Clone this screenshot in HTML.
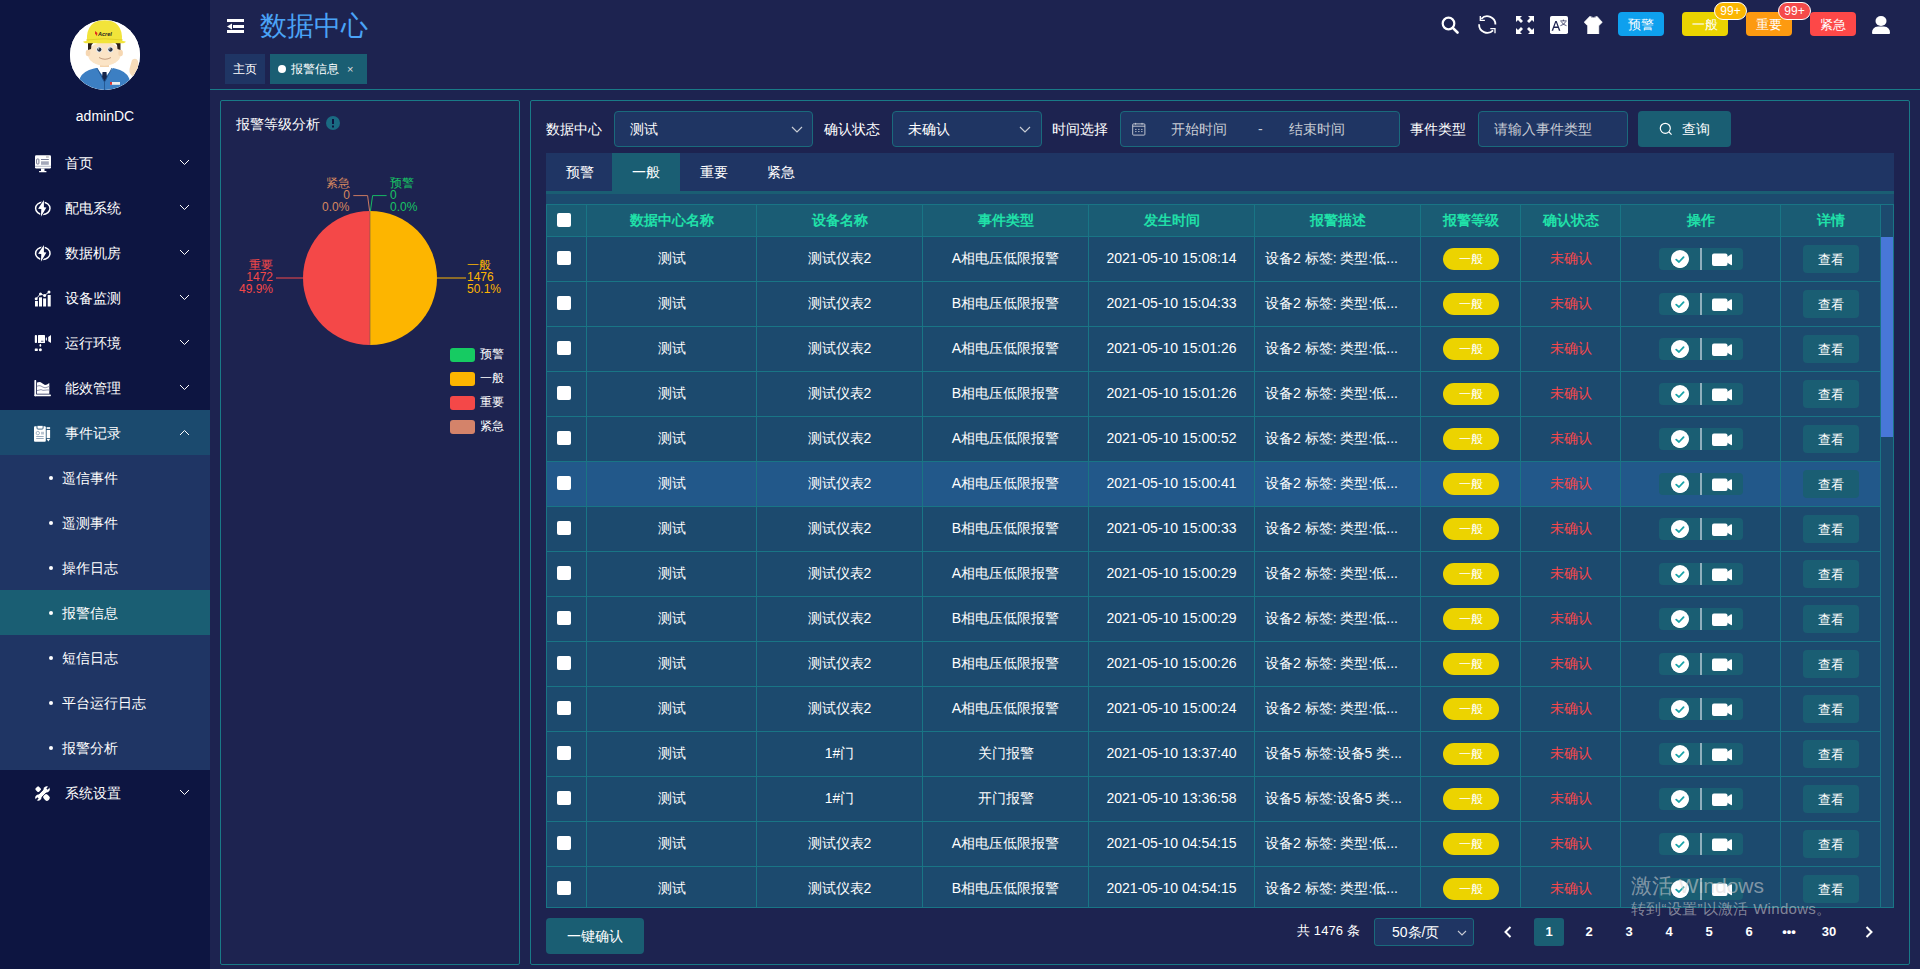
<!DOCTYPE html>
<html><head><meta charset="utf-8"><style>
*{margin:0;padding:0;box-sizing:border-box}
html,body{width:1920px;height:969px;overflow:hidden}
body{background:#1d2350;font-family:"Liberation Sans",sans-serif;color:#fff;font-size:14px;position:relative}
.abs{position:absolute}
#side{position:absolute;left:0;top:0;width:210px;height:969px;background:#0d1541}
.avatar{position:absolute;left:70px;top:20px;width:70px;height:70px;border-radius:50%;background:#fff;overflow:hidden}
.uname{position:absolute;left:0;width:210px;top:107px;text-align:center;font-size:14px;line-height:18px;color:#fff}
.mi{position:absolute;left:0;width:210px;height:45px}
.mi .ic{position:absolute;left:34px;top:14px;width:17px;height:17px}
.mi .tx{position:absolute;left:65px;top:1px;line-height:45px;font-size:14px;color:#fff}
.mi .ch{position:absolute;left:179px;top:19px;width:11px;height:7px}
.si{position:absolute;left:0;width:210px;height:45px}
.si .dot{position:absolute;left:49px;top:21px;width:4px;height:4px;border-radius:50%;background:#fff}
.si .tx{position:absolute;left:62px;top:1px;line-height:45px;font-size:14px;color:#fff}
.title{position:absolute;left:260px;top:9px;font-size:27px;line-height:34px;color:#4aa3f7}
.tab{position:absolute;top:54px;height:30px;line-height:30px;font-size:12px;color:#fff}
.hdrline{position:absolute;left:210px;top:89px;width:1710px;height:1px;background:#197a87}
.panel{position:absolute;border:1px solid #197a87;border-radius:2px}
.lbl{position:absolute;top:111px;line-height:36px;font-size:14px;color:#fff}
.inp{position:absolute;top:111px;height:36px;border:1px solid #1a6a7c;border-radius:4px;background:#1f3563;line-height:34px;font-size:14px}
.ph{color:#c8ccd4}
.btn{position:absolute;background:#1a5e73;border-radius:4px;color:#fff;text-align:center}
.tabbar{position:absolute;left:546px;top:153px;width:1348px;height:38px;background:#1f3564}
.tabbar .t{position:absolute;top:0;height:38px;line-height:38px;width:67px;text-align:center;font-size:14px}
.stripe{position:absolute;left:546px;top:191px;width:1348px;height:3px;background:#1a5e73}
.tarea{position:absolute;left:546px;top:194px;width:1348px;height:10px;background:#1c4a6e}
.thead{position:absolute;left:546px;top:204px;width:1335px;height:33px;background:#1a5c74;border-top:1px solid #197585;border-bottom:1px solid #197585}
.th{position:absolute;top:204px;height:33px;line-height:32px;text-align:center;color:#20e0a8;font-weight:bold;font-size:14px}
.tbody{position:absolute;left:546px;top:237px;width:1348px;height:670px;overflow:hidden;background:#1c4a6e}
.tr{position:absolute;left:546px;width:1335px;height:44px;background:#1c4a6e}
.tr.hov{background:#22588a}
.hl{position:absolute;left:546px;width:1335px;height:1px;background:#197585}
.vl{position:absolute;width:1px;background:#197585}
.td{position:absolute;height:44px;line-height:42px;text-align:center;font-size:14px;color:#fff;white-space:nowrap}
.tdl{text-align:left}
.red{color:#f5474b}
.cb{position:absolute;width:14px;height:14px;border-radius:2px;background:#fff}
.lvl{position:absolute;width:56px;height:22px;border-radius:11px;background:#ecd300;text-align:center;line-height:22px;font-size:12px;color:#fff}
.ops{position:absolute;width:84px;height:22px;border-radius:4px;background:#1a5e73}
.ops .chk{position:absolute;left:12px;top:2px;width:18px;height:18px;border-radius:50%;background:#fff}
.ops .dv{position:absolute;left:41px;top:0;width:2px;height:22px;background:#8fb0bd}
.ops .cam{position:absolute;left:53px;top:5px;width:20px;height:13px}
.det{position:absolute;width:56px;height:28px;border-radius:4px;background:#1a5e73;text-align:center;line-height:30px;font-size:13px;color:#fff}
.hbtn{position:absolute;top:12px;width:46px;height:24px;border-radius:4px;text-align:center;line-height:25px;font-size:13px;color:#fff}
.badge{position:absolute;top:2px;width:33px;height:18px;border-radius:9px;border:1px solid #fff;text-align:center;line-height:17px;font-size:12px;color:#fff}
.pg{position:absolute;top:918px;width:30px;height:28px;line-height:28px;text-align:center;font-size:13px;font-weight:bold;color:#fff}
.leg{position:absolute;left:450px;width:25px;height:14px;border-radius:3px}
.legt{position:absolute;left:480px;font-size:12px;line-height:14px;color:#fff}
.pl{position:absolute;font-size:12px;line-height:12px}
.pgs{font-size:14px!important}

</style></head><body>
<div id="side">
  <div class="avatar">
    <svg width="70" height="70" viewBox="0 0 70 70">
      <rect width="70" height="70" fill="#fff"/>
      <path d="M62 40 Q66 37 68 41 L69 50 Q66 56 62 56 Q58 52 60 47 Z" fill="#f6dcba"/>
      <path d="M6 70 L10 58 Q13 51 24 48.5 L34.5 46 L45 48.5 Q56 51 59 58 L63 70 Z" fill="#3c7fc3"/>
      <path d="M25.5 46.2 L34.5 58 L44.5 46.2 L40 45 L29 45 Z" fill="#fff"/>
      <path d="M32.5 52 L36.5 52 L37 58 L34.5 62 L32 58 Z" fill="#16254a"/>
      <path d="M27 48 L34.5 62 L34.5 70 M42 48 L34.5 62" stroke="#24568f" stroke-width="0.9" fill="none"/>
      <rect x="40" y="62" width="10" height="2.8" fill="#eee"/><rect x="40" y="62" width="2" height="2.8" fill="#d33"/>
      <rect x="30" y="41" width="9" height="6" fill="#f3d3ad"/>
      <ellipse cx="34.3" cy="34" rx="16.5" ry="11.8" fill="#fbe4c6"/>
      <ellipse cx="18" cy="33" rx="2.3" ry="3.3" fill="#f6d7b2"/>
      <ellipse cx="50.6" cy="33" rx="2.3" ry="3.3" fill="#f6d7b2"/>
      <path d="M18 30 L18 22 L24 22 L21.5 25 L21 29 Z" fill="#2a1f1a"/>
      <path d="M50.5 30 L50.5 22 L44.5 22 L47 25 L47.5 29 Z" fill="#2a1f1a"/>
      <circle cx="29.1" cy="29.5" r="2.9" fill="#e4ecf4"/><circle cx="29.3" cy="29.6" r="2.1" fill="#2b3242"/><circle cx="28.6" cy="28.8" r="0.6" fill="#fff"/>
      <circle cx="40.3" cy="29.5" r="2.9" fill="#e4ecf4"/><circle cx="40.5" cy="29.6" r="2.1" fill="#2b3242"/><circle cx="39.8" cy="28.8" r="0.6" fill="#fff"/>
      <path d="M29 37.5 Q35 41 41 37.5" stroke="#b58a6a" stroke-width="0.8" fill="none"/>
      <path d="M16.9 21 Q16 0.3 34.5 0.3 Q53 0.3 52 21 Z" fill="#f2e43a"/>
      <path d="M13.2 21.5 Q34.5 17 55.7 21.5 Q55.7 23.5 50 23.2 L19 23.2 Q13.2 23.5 13.2 21.5 Z" fill="#f2e43a"/>
      <path d="M16 20 Q34.5 17.5 53 20" stroke="#d6c21e" stroke-width="0.6" fill="none"/>
      <path d="M25 11 L27.5 13 L26.8 16 L25 13.5 Z" fill="#e42b1f"/>
      <text x="28" y="16" font-size="5.5" font-weight="bold" font-style="italic" fill="#222" font-family="Liberation Sans">Acrel</text>
    </svg>
  </div>
  <div class="uname">adminDC</div>

  <div class="mi" style="top:140px">
    <svg class="ic" style="width:18px;height:19px" viewBox="0 0 18 19"><rect x="1" y="1.2" width="16" height="13.3" rx="1.2" fill="#fff"/><rect x="2.6" y="5" width="2.3" height="5" rx="0.6" fill="none" stroke="#555a78" stroke-width="0.8"/><rect x="7" y="5" width="7.8" height="0.9" fill="#666b88"/><rect x="7" y="7.3" width="7.8" height="3.5" fill="#a4a8ba"/><rect x="12" y="2.6" width="2.8" height="0.8" fill="#888"/><rect x="1" y="11.8" width="16" height="0.9" fill="#aab0c0"/><rect x="7" y="14.5" width="3.5" height="2.8" fill="#fff"/><rect x="5" y="17.1" width="7.5" height="1.2" rx="0.5" fill="#fff"/></svg>
    <span class="tx">首页</span>
    <svg class="ch" viewBox="0 0 11 7"><path d="M1 1 L5.5 5.5 L10 1" stroke="#fff" stroke-width="1" fill="none"/></svg>
  </div>
  <div class="mi" style="top:185px">
    <svg class="ic" style="top:14px;left:34px;width:18px;height:19px" viewBox="0 0 18 19"><ellipse cx="8.8" cy="9.3" rx="7.2" ry="6.1" stroke="#fff" stroke-width="1.5" fill="none"/><path d="M9.9 0.9 L4.1 9.7 L7.3 10 L6.9 17.8 L12.4 8.6 L9.9 8.2 Z" fill="#fff" stroke="#0d1541" stroke-width="1.6" stroke-linejoin="round"/><path d="M9.9 0.9 L4.1 9.7 L7.3 10 L6.9 17.8 L12.4 8.6 L9.9 8.2 Z" fill="#fff"/></svg>
    <span class="tx">配电系统</span>
    <svg class="ch" viewBox="0 0 11 7"><path d="M1 1 L5.5 5.5 L10 1" stroke="#fff" stroke-width="1" fill="none"/></svg>
  </div>
  <div class="mi" style="top:230px">
    <svg class="ic" style="top:14px;left:34px;width:18px;height:19px" viewBox="0 0 18 19"><ellipse cx="8.8" cy="9.3" rx="7.2" ry="6.1" stroke="#fff" stroke-width="1.5" fill="none"/><path d="M9.9 0.9 L4.1 9.7 L7.3 10 L6.9 17.8 L12.4 8.6 L9.9 8.2 Z" fill="#fff" stroke="#0d1541" stroke-width="1.6" stroke-linejoin="round"/><path d="M9.9 0.9 L4.1 9.7 L7.3 10 L6.9 17.8 L12.4 8.6 L9.9 8.2 Z" fill="#fff"/></svg>
    <span class="tx">数据机房</span>
    <svg class="ch" viewBox="0 0 11 7"><path d="M1 1 L5.5 5.5 L10 1" stroke="#fff" stroke-width="1" fill="none"/></svg>
  </div>
  <div class="mi" style="top:275px">
    <svg class="ic" style="width:18px;height:19px" viewBox="0 0 18 19"><rect x="1" y="12" width="2.9" height="5.5" fill="#fff"/><rect x="5" y="8.3" width="3" height="9.2" fill="#fff"/><rect x="9.1" y="9.4" width="3" height="8.1" fill="#fff"/><rect x="13.7" y="6" width="3" height="11.5" fill="#fff"/><path d="M2.2 9.7 L6.5 4.9 L10.6 6.5 L15 3" stroke="#0d1541" stroke-width="2.4" fill="none"/><path d="M2.2 9.7 L6.5 4.9 L10.6 6.5 L15 3" stroke="#fff" stroke-width="0.9" fill="none"/><circle cx="2.2" cy="9.7" r="1.5" fill="#fff"/><circle cx="6.5" cy="4.9" r="1.5" fill="#fff"/><circle cx="10.6" cy="6.5" r="1.5" fill="#fff"/><circle cx="15" cy="3" r="1.5" fill="#fff"/></svg>
    <span class="tx">设备监测</span>
    <svg class="ch" viewBox="0 0 11 7"><path d="M1 1 L5.5 5.5 L10 1" stroke="#fff" stroke-width="1" fill="none"/></svg>
  </div>
  <div class="mi" style="top:320px">
    <svg class="ic" style="width:18px;height:19px" viewBox="0 0 18 19"><rect x="0.8" y="1.1" width="2.2" height="8" rx="0.8" fill="#fff"/><rect x="4" y="1.1" width="7" height="8" rx="0.5" fill="#fff"/><rect x="7" y="6.7" width="2.4" height="1.1" fill="#666b88"/><ellipse cx="12.35" cy="5" rx="0.6" ry="1.7" fill="#fff"/><path d="M14.2 3 L17 1.1 L17 9.1 L14.2 7.3 Z" fill="#fff"/><ellipse cx="6.35" cy="11.4" rx="0.9" ry="1.4" fill="#fff"/><circle cx="6.35" cy="15.8" r="1.5" fill="#fff"/><rect x="0.8" y="14.5" width="3" height="2.5" rx="0.6" fill="#fff"/></svg>
    <span class="tx">运行环境</span>
    <svg class="ch" viewBox="0 0 11 7"><path d="M1 1 L5.5 5.5 L10 1" stroke="#fff" stroke-width="1" fill="none"/></svg>
  </div>
  <div class="mi" style="top:365px">
    <svg class="ic" style="width:18px;height:19px" viewBox="0 0 18 19"><rect x="0.4" y="1.1" width="1.8" height="16.1" rx="0.6" fill="#fff"/><rect x="0.4" y="15.6" width="16.5" height="1.6" rx="0.6" fill="#fff"/><path d="M3 3.5 Q5 2.6 6.7 3.2 Q9 4.6 11 6 Q13 5.8 15.3 4 L15.3 14.8 L3 14.8 Z" fill="#fff"/><path d="M3 7.2 Q5 6.2 7 7 Q9 8.4 11 8.8 Q13 8.4 15.3 7.4" stroke="#9296ad" stroke-width="1" fill="none"/><path d="M3 11.6 Q5 11.2 7 10.6 Q9 11.8 11 11.2 Q13 10.8 15.3 11" stroke="#9296ad" stroke-width="1" fill="none"/></svg>
    <span class="tx">能效管理</span>
    <svg class="ch" viewBox="0 0 11 7"><path d="M1 1 L5.5 5.5 L10 1" stroke="#fff" stroke-width="1" fill="none"/></svg>
  </div>
  <div class="mi" style="top:410px;background:#1b4a6e">
    <svg class="ic" style="width:18px;height:19px" viewBox="0 0 18 19"><rect x="0" y="2.2" width="11.8" height="15.5" rx="1" fill="#fff"/><rect x="3" y="1.4" width="6.1" height="3.7" rx="1" fill="#fff" stroke="#1b4a6e" stroke-width="0.8"/><circle cx="3.8" cy="9.1" r="1.7" fill="none" stroke="#8ea3b8" stroke-width="0.8"/><rect x="7" y="7.8" width="3" height="2.7" fill="#b8c4d0"/><rect x="2.2" y="12" width="7.5" height="0.9" fill="#8ea3b8"/><rect x="2.2" y="14.1" width="7.5" height="0.9" fill="#8ea3b8"/><rect x="12.6" y="3.2" width="3.5" height="1.7" fill="#fff"/><rect x="12.6" y="5.9" width="3.5" height="8.3" fill="#fff"/><path d="M12.6 15 L16.1 15 L14.35 17.5 Z" fill="#fff"/></svg>
    <span class="tx">事件记录</span>
    <svg class="ch" viewBox="0 0 11 7"><path d="M1 6 L5.5 1.5 L10 6" stroke="#fff" stroke-width="1" fill="none"/></svg>
  </div>
  <div class="abs" style="left:0;top:455px;width:210px;height:315px;background:#1f3564"></div>
  <div class="si" style="top:455px"><span class="dot"></span><span class="tx">遥信事件</span></div>
  <div class="si" style="top:500px"><span class="dot"></span><span class="tx">遥测事件</span></div>
  <div class="si" style="top:545px"><span class="dot"></span><span class="tx">操作日志</span></div>
  <div class="si" style="top:590px;background:#1a5e73"><span class="dot"></span><span class="tx">报警信息</span></div>
  <div class="si" style="top:635px"><span class="dot"></span><span class="tx">短信日志</span></div>
  <div class="si" style="top:680px"><span class="dot"></span><span class="tx">平台运行日志</span></div>
  <div class="si" style="top:725px"><span class="dot"></span><span class="tx">报警分析</span></div>
  <div class="mi" style="top:770px">
    <svg class="ic" style="top:15px" viewBox="0 0 17 17"><g transform="rotate(-45 8.5 8.5)"><rect x="6.2" y="0" width="4.6" height="4.8" rx="1.2" fill="#fff"/><rect x="7.3" y="8" width="2.4" height="4" fill="#fff"/><rect x="5.8" y="10.8" width="5.4" height="6.6" rx="2.2" fill="#fff"/></g><g transform="rotate(45 8.5 8.5)"><path d="M6.3 3.5 L10.7 3.5 L10.7 13.5 L6.3 13.5 Z" fill="#fff" stroke="#0d1541" stroke-width="0.8"/><circle cx="8.5" cy="2.6" r="3" fill="#fff"/><circle cx="8.5" cy="14.4" r="3" fill="#fff"/><rect x="7.6" y="-0.8" width="1.8" height="3" fill="#0d1541"/><rect x="7.6" y="14.8" width="1.8" height="3" fill="#0d1541"/></g></svg>
    <span class="tx">系统设置</span>
    <svg class="ch" viewBox="0 0 11 7"><path d="M1 1 L5.5 5.5 L10 1" stroke="#fff" stroke-width="1" fill="none"/></svg>
  </div>
</div>

<!-- header -->
<svg class="abs" style="left:227px;top:19px" width="17" height="15" viewBox="0 0 17 15"><rect x="0" y="0" width="17" height="3" fill="#fff"/><rect x="6" y="6" width="11" height="3" fill="#fff"/><path d="M0 7.5 L5 4.5 L5 10.5 Z" fill="#fff"/><rect x="0" y="11" width="17" height="3" fill="#fff"/></svg>
<div class="title">数据中心</div>
<div class="tab" style="left:225px;width:40px;background:#1f3564;text-align:center">主页</div>
<div class="tab" style="left:270px;width:97px;background:#1a5e73"><span class="abs" style="left:8px;top:11px;width:8px;height:8px;border-radius:50%;background:#fff"></span><span class="abs" style="left:21px;top:0">报警信息</span><span class="abs" style="left:77px;top:0;font-size:11px;color:#ddd">×</span></div>
<div class="hdrline"></div>

<!-- top right icons -->
<svg class="abs" style="left:1441px;top:16px" width="18" height="18" viewBox="0 0 18 18"><circle cx="7.5" cy="7.5" r="5.8" stroke="#fff" stroke-width="2.2" fill="none"/><path d="M11.8 11.8 L16.5 16.5" stroke="#fff" stroke-width="2.6" stroke-linecap="round"/></svg>
<svg class="abs" style="left:1474px;top:12px" width="26" height="26" viewBox="0 0 26 26"><path d="M21.4 12.6 A8.2 8.2 0 0 0 7.3 6.8" stroke="#fff" stroke-width="1.8" fill="none"/><path d="M6.3 4 L6.3 8.3 L10.9 8.3" stroke="#fff" stroke-width="1.3" fill="none"/><path d="M5.1 12.3 A8.2 8.2 0 0 0 19.1 18.4" stroke="#fff" stroke-width="1.8" fill="none"/><path d="M16.3 16.7 L21 16.7 L21 21.3" stroke="#fff" stroke-width="1.3" fill="none"/></svg>
<svg class="abs" style="left:1516px;top:16px" width="18" height="18" viewBox="0 0 18 18"><path d="M0 0 L6 0 L4 2 L7 5 L5 7 L2 4 L0 6 Z M18 0 L12 0 L14 2 L11 5 L13 7 L16 4 L18 6 Z M0 18 L6 18 L4 16 L7 13 L5 11 L2 14 L0 12 Z M18 18 L12 18 L14 16 L11 13 L13 11 L16 14 L18 12 Z" fill="#fff"/></svg>
<svg class="abs" style="left:1550px;top:16px" width="18" height="18" viewBox="0 0 18 18"><rect x="0" y="0" width="18" height="18" rx="1.8" fill="#fff"/><path d="M1.6 14.7 L5.3 5 L6.7 5 L10.4 14.7 L8.9 14.7 L8 12 L4 12 L3.1 14.7 Z M4.5 10.6 L7.5 10.6 L6 6.6 Z" fill="#1e2350"/><path d="M10.3 4.9 L16.6 4.9 M13.4 3.6 L13.4 4.9 M11.2 5.5 Q13 9 16.5 9.7 M15.8 5.5 Q14 9 10.4 9.7" stroke="#1e2350" stroke-width="0.75" fill="none"/></svg>
<svg class="abs" style="left:1584px;top:16px" width="19" height="18" viewBox="0 0 19 18"><path d="M5.9 0.2 Q9.4 3.2 12.9 0.2 L18.3 6.3 L14.8 9.7 L14.8 18 L3.6 18 L3.6 9.7 L0.1 6.3 Z" fill="#fff" stroke="#fff" stroke-width="0.6" stroke-linejoin="round"/></svg>
<div class="hbtn" style="left:1618px;background:#0ea0ee">预警</div>
<div class="hbtn" style="left:1682px;background:#ebd400">一般</div>
<div class="badge" style="left:1714px;background:#fbb600">99+</div>
<div class="hbtn" style="left:1746px;background:#fd9a10">重要</div>
<div class="badge" style="left:1778px;background:#f54a4a">99+</div>
<div class="hbtn" style="left:1810px;background:#fd4848">紧急</div>
<svg class="abs" style="left:1872px;top:16px" width="18" height="18" viewBox="0 0 18 18"><ellipse cx="9" cy="5" rx="5.5" ry="5" fill="#fff"/><path d="M0 17 Q0 11 6 10.5 L12 10.5 Q18 11 18 17 Q18 18 17 18 L1 18 Q0 18 0 17 Z" fill="#fff"/></svg>

<!-- left panel -->
<div class="panel" style="left:220px;top:100px;width:300px;height:865px"></div>
<div class="abs" style="left:236px;top:115px;font-size:14px;line-height:18px">报警等级分析</div>
<svg class="abs" style="left:326px;top:116px" width="14" height="14" viewBox="0 0 14 14"><circle cx="7" cy="7" r="7" fill="#1a6a82"/><rect x="6" y="3" width="2" height="5" fill="#0d1541"/><rect x="6" y="9.5" width="2" height="2" fill="#0d1541"/></svg>
<svg class="abs" style="left:220px;top:160px" width="300" height="300" viewBox="220 160 300 300">
  <path d="M370 211 A67 67 0 0 1 370 345 Z" fill="#fdb500"/>
  <path d="M370 345 A67 67 0 0 1 370 211 Z" fill="#f44848"/>
  <line x1="370" y1="211" x2="370" y2="345" stroke="#6a5a4a" stroke-width="0.6"/>
  <path d="M437 278 L466 278" stroke="#fdb500" stroke-width="1"/>
  <path d="M303 278 L276 278" stroke="#f44848" stroke-width="1"/>
  <path d="M353.3 195.6 L367.6 195.6 L369.6 211" stroke="#c97a62" stroke-width="1" fill="none"/>
  <path d="M386.6 195.6 L372.6 195.6 L370.4 211" stroke="#18b865" stroke-width="1" fill="none"/>
</svg>
<div class="pl" style="left:326px;top:177px;color:#d6875f">紧急</div>
<div class="pl" style="left:330px;top:189px;width:20px;text-align:right;color:#d6875f">0</div>
<div class="pl" style="left:322px;top:201px;color:#d6875f">0.0%</div>
<div class="pl" style="left:390px;top:177px;color:#18c464">预警</div>
<div class="pl" style="left:390px;top:189px;color:#18c464">0</div>
<div class="pl" style="left:390px;top:201px;color:#18c464">0.0%</div>
<div class="pl" style="left:223px;top:259px;width:50px;text-align:right;color:#f44848">重要<br>1472<br>49.9%</div>
<div class="pl" style="left:467px;top:259px;color:#fdb500">一般<br>1476<br>50.1%</div>
<div class="leg" style="top:348px;background:#16cb62"></div><div class="legt" style="top:347px">预警</div>
<div class="leg" style="top:372px;background:#fdb500"></div><div class="legt" style="top:371px">一般</div>
<div class="leg" style="top:396px;background:#f44848"></div><div class="legt" style="top:395px">重要</div>
<div class="leg" style="top:420px;background:#d4836a"></div><div class="legt" style="top:419px">紧急</div>

<!-- main panel -->
<div class="panel" style="left:530px;top:100px;width:1380px;height:865px"></div>
<div class="lbl" style="left:546px">数据中心</div>
<div class="inp" style="left:614px;width:199px;padding-left:15px">测试<svg class="abs" style="left:176px;top:14px" width="12" height="7" viewBox="0 0 12 7"><path d="M1 1 L6 6 L11 1" stroke="#c8ccd4" stroke-width="1.2" fill="none"/></svg></div>
<div class="lbl" style="left:824px">确认状态</div>
<div class="inp" style="left:892px;width:150px;padding-left:15px">未确认<svg class="abs" style="left:126px;top:14px" width="12" height="7" viewBox="0 0 12 7"><path d="M1 1 L6 6 L11 1" stroke="#c8ccd4" stroke-width="1.2" fill="none"/></svg></div>
<div class="lbl" style="left:1052px">时间选择</div>
<div class="inp" style="left:1120px;width:280px">
  <svg class="abs" style="left:11px;top:10px" width="14" height="14" viewBox="0 0 14 14"><rect x="0.7" y="1.9" width="12.2" height="11.2" rx="0.8" stroke="#d0d3da" stroke-width="0.9" fill="none"/><path d="M0.7 4.2 H12.9" stroke="#d0d3da" stroke-width="0.9"/><path d="M3.6 0.9 V2.6 M10 0.9 V2.6" stroke="#d0d3da" stroke-width="0.9"/><path d="M3 7.4 H4.6 M6 7.4 H7.6 M9 7.4 H10.6 M3 9.6 H4.6 M6 9.6 H7.6 M9 9.6 H10.6" stroke="#b8bcc8" stroke-width="0.9"/></svg>
  <span class="abs ph" style="left:50px;top:0;font-size:14px">开始时间</span>
  <span class="abs ph" style="left:137px;top:0;font-size:14px">-</span>
  <span class="abs ph" style="left:168px;top:0;font-size:14px">结束时间</span>
</div>
<div class="lbl" style="left:1410px">事件类型</div>
<div class="inp" style="left:1478px;width:150px;padding-left:15px"><span class="ph" style="font-size:14px">请输入事件类型</span></div>
<div class="btn" style="left:1638px;top:111px;width:93px;height:36px;line-height:36px;font-size:14px"><svg class="abs" style="left:21px;top:11px" width="14" height="14" viewBox="0 0 14 14"><circle cx="6.3" cy="6.3" r="5" stroke="#fff" stroke-width="1.2" fill="none"/><path d="M10 10 L12.6 12.6" stroke="#fff" stroke-width="1.2"/></svg><span class="abs" style="left:44px;top:0">查询</span></div>

<div class="tabbar"><div class="t" style="left:0">预警</div><div class="t" style="left:66px;width:68px;background:#1a5e73">一般</div><div class="t" style="left:134px">重要</div><div class="t" style="left:201px">紧急</div></div>
<div class="stripe"></div>
<div class="tarea"></div>
<div class="tbody"></div>
<div class="thead"></div>
<div class="abs" style="left:1881px;top:204px;width:13px;height:33px;background:#1c4a6e;border-top:1px solid #197585"></div>
<div class="cb" style="left:557px;top:213px"></div>
<div class="th" style="left:587px;width:169px">数据中心名称</div>
<div class="th" style="left:757px;width:165px">设备名称</div>
<div class="th" style="left:923px;width:165px">事件类型</div>
<div class="th" style="left:1089px;width:165px">发生时间</div>
<div class="th" style="left:1255px;width:165px">报警描述</div>
<div class="th" style="left:1421px;width:99px">报警等级</div>
<div class="th" style="left:1521px;width:99px">确认状态</div>
<div class="th" style="left:1621px;width:159px">操作</div>
<div class="th" style="left:1781px;width:99px">详情</div>
<div class="tr" style="top:237px;height:44px"></div>
<div class="hl" style="top:281px"></div>
<div class="cb" style="left:557px;top:251px"></div>
<div class="td" style="left:587px;width:169px;top:237px">测试</div>
<div class="td" style="left:757px;width:165px;top:237px">测试仪表2</div>
<div class="td" style="left:923px;width:165px;top:237px">A相电压低限报警</div>
<div class="td" style="left:1089px;width:165px;top:237px">2021-05-10 15:08:14</div>
<div class="td tdl" style="left:1265px;top:237px">设备2 标签: 类型:低...</div>
<div class="lvl" style="left:1443px;top:248px">一般</div>
<div class="td red" style="left:1521px;width:99px;top:237px">未确认</div>
<div class="ops" style="left:1659px;top:248px"><svg class="chk" viewBox="0 0 18 18"><circle cx="9" cy="9.6" r="8.6" fill="#fff"/><path d="M5.2 9.6 L8 12 L12.6 7.2" stroke="#1aa3a8" stroke-width="1.8" fill="none" stroke-linecap="round" stroke-linejoin="round"/></svg><span class="dv"></span><svg class="cam" viewBox="0 0 20 13"><rect x="0" y="0.5" width="15.5" height="12.5" rx="2" fill="#fff"/><path d="M15 4 L19 1.3 Q20 1 20 2 L20 11.5 Q20 12.5 19 12 L15 9.5 Z" fill="#fff"/></svg></div>
<div class="det" style="left:1803px;top:245px">查看</div>
<div class="tr" style="top:282px;height:44px"></div>
<div class="hl" style="top:326px"></div>
<div class="cb" style="left:557px;top:296px"></div>
<div class="td" style="left:587px;width:169px;top:282px">测试</div>
<div class="td" style="left:757px;width:165px;top:282px">测试仪表2</div>
<div class="td" style="left:923px;width:165px;top:282px">B相电压低限报警</div>
<div class="td" style="left:1089px;width:165px;top:282px">2021-05-10 15:04:33</div>
<div class="td tdl" style="left:1265px;top:282px">设备2 标签: 类型:低...</div>
<div class="lvl" style="left:1443px;top:293px">一般</div>
<div class="td red" style="left:1521px;width:99px;top:282px">未确认</div>
<div class="ops" style="left:1659px;top:293px"><svg class="chk" viewBox="0 0 18 18"><circle cx="9" cy="9.6" r="8.6" fill="#fff"/><path d="M5.2 9.6 L8 12 L12.6 7.2" stroke="#1aa3a8" stroke-width="1.8" fill="none" stroke-linecap="round" stroke-linejoin="round"/></svg><span class="dv"></span><svg class="cam" viewBox="0 0 20 13"><rect x="0" y="0.5" width="15.5" height="12.5" rx="2" fill="#fff"/><path d="M15 4 L19 1.3 Q20 1 20 2 L20 11.5 Q20 12.5 19 12 L15 9.5 Z" fill="#fff"/></svg></div>
<div class="det" style="left:1803px;top:290px">查看</div>
<div class="tr" style="top:327px;height:44px"></div>
<div class="hl" style="top:371px"></div>
<div class="cb" style="left:557px;top:341px"></div>
<div class="td" style="left:587px;width:169px;top:327px">测试</div>
<div class="td" style="left:757px;width:165px;top:327px">测试仪表2</div>
<div class="td" style="left:923px;width:165px;top:327px">A相电压低限报警</div>
<div class="td" style="left:1089px;width:165px;top:327px">2021-05-10 15:01:26</div>
<div class="td tdl" style="left:1265px;top:327px">设备2 标签: 类型:低...</div>
<div class="lvl" style="left:1443px;top:338px">一般</div>
<div class="td red" style="left:1521px;width:99px;top:327px">未确认</div>
<div class="ops" style="left:1659px;top:338px"><svg class="chk" viewBox="0 0 18 18"><circle cx="9" cy="9.6" r="8.6" fill="#fff"/><path d="M5.2 9.6 L8 12 L12.6 7.2" stroke="#1aa3a8" stroke-width="1.8" fill="none" stroke-linecap="round" stroke-linejoin="round"/></svg><span class="dv"></span><svg class="cam" viewBox="0 0 20 13"><rect x="0" y="0.5" width="15.5" height="12.5" rx="2" fill="#fff"/><path d="M15 4 L19 1.3 Q20 1 20 2 L20 11.5 Q20 12.5 19 12 L15 9.5 Z" fill="#fff"/></svg></div>
<div class="det" style="left:1803px;top:335px">查看</div>
<div class="tr" style="top:372px;height:44px"></div>
<div class="hl" style="top:416px"></div>
<div class="cb" style="left:557px;top:386px"></div>
<div class="td" style="left:587px;width:169px;top:372px">测试</div>
<div class="td" style="left:757px;width:165px;top:372px">测试仪表2</div>
<div class="td" style="left:923px;width:165px;top:372px">B相电压低限报警</div>
<div class="td" style="left:1089px;width:165px;top:372px">2021-05-10 15:01:26</div>
<div class="td tdl" style="left:1265px;top:372px">设备2 标签: 类型:低...</div>
<div class="lvl" style="left:1443px;top:383px">一般</div>
<div class="td red" style="left:1521px;width:99px;top:372px">未确认</div>
<div class="ops" style="left:1659px;top:383px"><svg class="chk" viewBox="0 0 18 18"><circle cx="9" cy="9.6" r="8.6" fill="#fff"/><path d="M5.2 9.6 L8 12 L12.6 7.2" stroke="#1aa3a8" stroke-width="1.8" fill="none" stroke-linecap="round" stroke-linejoin="round"/></svg><span class="dv"></span><svg class="cam" viewBox="0 0 20 13"><rect x="0" y="0.5" width="15.5" height="12.5" rx="2" fill="#fff"/><path d="M15 4 L19 1.3 Q20 1 20 2 L20 11.5 Q20 12.5 19 12 L15 9.5 Z" fill="#fff"/></svg></div>
<div class="det" style="left:1803px;top:380px">查看</div>
<div class="tr" style="top:417px;height:44px"></div>
<div class="hl" style="top:461px"></div>
<div class="cb" style="left:557px;top:431px"></div>
<div class="td" style="left:587px;width:169px;top:417px">测试</div>
<div class="td" style="left:757px;width:165px;top:417px">测试仪表2</div>
<div class="td" style="left:923px;width:165px;top:417px">A相电压低限报警</div>
<div class="td" style="left:1089px;width:165px;top:417px">2021-05-10 15:00:52</div>
<div class="td tdl" style="left:1265px;top:417px">设备2 标签: 类型:低...</div>
<div class="lvl" style="left:1443px;top:428px">一般</div>
<div class="td red" style="left:1521px;width:99px;top:417px">未确认</div>
<div class="ops" style="left:1659px;top:428px"><svg class="chk" viewBox="0 0 18 18"><circle cx="9" cy="9.6" r="8.6" fill="#fff"/><path d="M5.2 9.6 L8 12 L12.6 7.2" stroke="#1aa3a8" stroke-width="1.8" fill="none" stroke-linecap="round" stroke-linejoin="round"/></svg><span class="dv"></span><svg class="cam" viewBox="0 0 20 13"><rect x="0" y="0.5" width="15.5" height="12.5" rx="2" fill="#fff"/><path d="M15 4 L19 1.3 Q20 1 20 2 L20 11.5 Q20 12.5 19 12 L15 9.5 Z" fill="#fff"/></svg></div>
<div class="det" style="left:1803px;top:425px">查看</div>
<div class="tr hov" style="top:462px;height:44px"></div>
<div class="hl" style="top:506px"></div>
<div class="cb" style="left:557px;top:476px"></div>
<div class="td" style="left:587px;width:169px;top:462px">测试</div>
<div class="td" style="left:757px;width:165px;top:462px">测试仪表2</div>
<div class="td" style="left:923px;width:165px;top:462px">A相电压低限报警</div>
<div class="td" style="left:1089px;width:165px;top:462px">2021-05-10 15:00:41</div>
<div class="td tdl" style="left:1265px;top:462px">设备2 标签: 类型:低...</div>
<div class="lvl" style="left:1443px;top:473px">一般</div>
<div class="td red" style="left:1521px;width:99px;top:462px">未确认</div>
<div class="ops" style="left:1659px;top:473px"><svg class="chk" viewBox="0 0 18 18"><circle cx="9" cy="9.6" r="8.6" fill="#fff"/><path d="M5.2 9.6 L8 12 L12.6 7.2" stroke="#1aa3a8" stroke-width="1.8" fill="none" stroke-linecap="round" stroke-linejoin="round"/></svg><span class="dv"></span><svg class="cam" viewBox="0 0 20 13"><rect x="0" y="0.5" width="15.5" height="12.5" rx="2" fill="#fff"/><path d="M15 4 L19 1.3 Q20 1 20 2 L20 11.5 Q20 12.5 19 12 L15 9.5 Z" fill="#fff"/></svg></div>
<div class="det" style="left:1803px;top:470px">查看</div>
<div class="tr" style="top:507px;height:44px"></div>
<div class="hl" style="top:551px"></div>
<div class="cb" style="left:557px;top:521px"></div>
<div class="td" style="left:587px;width:169px;top:507px">测试</div>
<div class="td" style="left:757px;width:165px;top:507px">测试仪表2</div>
<div class="td" style="left:923px;width:165px;top:507px">B相电压低限报警</div>
<div class="td" style="left:1089px;width:165px;top:507px">2021-05-10 15:00:33</div>
<div class="td tdl" style="left:1265px;top:507px">设备2 标签: 类型:低...</div>
<div class="lvl" style="left:1443px;top:518px">一般</div>
<div class="td red" style="left:1521px;width:99px;top:507px">未确认</div>
<div class="ops" style="left:1659px;top:518px"><svg class="chk" viewBox="0 0 18 18"><circle cx="9" cy="9.6" r="8.6" fill="#fff"/><path d="M5.2 9.6 L8 12 L12.6 7.2" stroke="#1aa3a8" stroke-width="1.8" fill="none" stroke-linecap="round" stroke-linejoin="round"/></svg><span class="dv"></span><svg class="cam" viewBox="0 0 20 13"><rect x="0" y="0.5" width="15.5" height="12.5" rx="2" fill="#fff"/><path d="M15 4 L19 1.3 Q20 1 20 2 L20 11.5 Q20 12.5 19 12 L15 9.5 Z" fill="#fff"/></svg></div>
<div class="det" style="left:1803px;top:515px">查看</div>
<div class="tr" style="top:552px;height:44px"></div>
<div class="hl" style="top:596px"></div>
<div class="cb" style="left:557px;top:566px"></div>
<div class="td" style="left:587px;width:169px;top:552px">测试</div>
<div class="td" style="left:757px;width:165px;top:552px">测试仪表2</div>
<div class="td" style="left:923px;width:165px;top:552px">A相电压低限报警</div>
<div class="td" style="left:1089px;width:165px;top:552px">2021-05-10 15:00:29</div>
<div class="td tdl" style="left:1265px;top:552px">设备2 标签: 类型:低...</div>
<div class="lvl" style="left:1443px;top:563px">一般</div>
<div class="td red" style="left:1521px;width:99px;top:552px">未确认</div>
<div class="ops" style="left:1659px;top:563px"><svg class="chk" viewBox="0 0 18 18"><circle cx="9" cy="9.6" r="8.6" fill="#fff"/><path d="M5.2 9.6 L8 12 L12.6 7.2" stroke="#1aa3a8" stroke-width="1.8" fill="none" stroke-linecap="round" stroke-linejoin="round"/></svg><span class="dv"></span><svg class="cam" viewBox="0 0 20 13"><rect x="0" y="0.5" width="15.5" height="12.5" rx="2" fill="#fff"/><path d="M15 4 L19 1.3 Q20 1 20 2 L20 11.5 Q20 12.5 19 12 L15 9.5 Z" fill="#fff"/></svg></div>
<div class="det" style="left:1803px;top:560px">查看</div>
<div class="tr" style="top:597px;height:44px"></div>
<div class="hl" style="top:641px"></div>
<div class="cb" style="left:557px;top:611px"></div>
<div class="td" style="left:587px;width:169px;top:597px">测试</div>
<div class="td" style="left:757px;width:165px;top:597px">测试仪表2</div>
<div class="td" style="left:923px;width:165px;top:597px">B相电压低限报警</div>
<div class="td" style="left:1089px;width:165px;top:597px">2021-05-10 15:00:29</div>
<div class="td tdl" style="left:1265px;top:597px">设备2 标签: 类型:低...</div>
<div class="lvl" style="left:1443px;top:608px">一般</div>
<div class="td red" style="left:1521px;width:99px;top:597px">未确认</div>
<div class="ops" style="left:1659px;top:608px"><svg class="chk" viewBox="0 0 18 18"><circle cx="9" cy="9.6" r="8.6" fill="#fff"/><path d="M5.2 9.6 L8 12 L12.6 7.2" stroke="#1aa3a8" stroke-width="1.8" fill="none" stroke-linecap="round" stroke-linejoin="round"/></svg><span class="dv"></span><svg class="cam" viewBox="0 0 20 13"><rect x="0" y="0.5" width="15.5" height="12.5" rx="2" fill="#fff"/><path d="M15 4 L19 1.3 Q20 1 20 2 L20 11.5 Q20 12.5 19 12 L15 9.5 Z" fill="#fff"/></svg></div>
<div class="det" style="left:1803px;top:605px">查看</div>
<div class="tr" style="top:642px;height:44px"></div>
<div class="hl" style="top:686px"></div>
<div class="cb" style="left:557px;top:656px"></div>
<div class="td" style="left:587px;width:169px;top:642px">测试</div>
<div class="td" style="left:757px;width:165px;top:642px">测试仪表2</div>
<div class="td" style="left:923px;width:165px;top:642px">B相电压低限报警</div>
<div class="td" style="left:1089px;width:165px;top:642px">2021-05-10 15:00:26</div>
<div class="td tdl" style="left:1265px;top:642px">设备2 标签: 类型:低...</div>
<div class="lvl" style="left:1443px;top:653px">一般</div>
<div class="td red" style="left:1521px;width:99px;top:642px">未确认</div>
<div class="ops" style="left:1659px;top:653px"><svg class="chk" viewBox="0 0 18 18"><circle cx="9" cy="9.6" r="8.6" fill="#fff"/><path d="M5.2 9.6 L8 12 L12.6 7.2" stroke="#1aa3a8" stroke-width="1.8" fill="none" stroke-linecap="round" stroke-linejoin="round"/></svg><span class="dv"></span><svg class="cam" viewBox="0 0 20 13"><rect x="0" y="0.5" width="15.5" height="12.5" rx="2" fill="#fff"/><path d="M15 4 L19 1.3 Q20 1 20 2 L20 11.5 Q20 12.5 19 12 L15 9.5 Z" fill="#fff"/></svg></div>
<div class="det" style="left:1803px;top:650px">查看</div>
<div class="tr" style="top:687px;height:44px"></div>
<div class="hl" style="top:731px"></div>
<div class="cb" style="left:557px;top:701px"></div>
<div class="td" style="left:587px;width:169px;top:687px">测试</div>
<div class="td" style="left:757px;width:165px;top:687px">测试仪表2</div>
<div class="td" style="left:923px;width:165px;top:687px">A相电压低限报警</div>
<div class="td" style="left:1089px;width:165px;top:687px">2021-05-10 15:00:24</div>
<div class="td tdl" style="left:1265px;top:687px">设备2 标签: 类型:低...</div>
<div class="lvl" style="left:1443px;top:698px">一般</div>
<div class="td red" style="left:1521px;width:99px;top:687px">未确认</div>
<div class="ops" style="left:1659px;top:698px"><svg class="chk" viewBox="0 0 18 18"><circle cx="9" cy="9.6" r="8.6" fill="#fff"/><path d="M5.2 9.6 L8 12 L12.6 7.2" stroke="#1aa3a8" stroke-width="1.8" fill="none" stroke-linecap="round" stroke-linejoin="round"/></svg><span class="dv"></span><svg class="cam" viewBox="0 0 20 13"><rect x="0" y="0.5" width="15.5" height="12.5" rx="2" fill="#fff"/><path d="M15 4 L19 1.3 Q20 1 20 2 L20 11.5 Q20 12.5 19 12 L15 9.5 Z" fill="#fff"/></svg></div>
<div class="det" style="left:1803px;top:695px">查看</div>
<div class="tr" style="top:732px;height:44px"></div>
<div class="hl" style="top:776px"></div>
<div class="cb" style="left:557px;top:746px"></div>
<div class="td" style="left:587px;width:169px;top:732px">测试</div>
<div class="td" style="left:757px;width:165px;top:732px">1#门</div>
<div class="td" style="left:923px;width:165px;top:732px">关门报警</div>
<div class="td" style="left:1089px;width:165px;top:732px">2021-05-10 13:37:40</div>
<div class="td tdl" style="left:1265px;top:732px">设备5 标签:设备5 类...</div>
<div class="lvl" style="left:1443px;top:743px">一般</div>
<div class="td red" style="left:1521px;width:99px;top:732px">未确认</div>
<div class="ops" style="left:1659px;top:743px"><svg class="chk" viewBox="0 0 18 18"><circle cx="9" cy="9.6" r="8.6" fill="#fff"/><path d="M5.2 9.6 L8 12 L12.6 7.2" stroke="#1aa3a8" stroke-width="1.8" fill="none" stroke-linecap="round" stroke-linejoin="round"/></svg><span class="dv"></span><svg class="cam" viewBox="0 0 20 13"><rect x="0" y="0.5" width="15.5" height="12.5" rx="2" fill="#fff"/><path d="M15 4 L19 1.3 Q20 1 20 2 L20 11.5 Q20 12.5 19 12 L15 9.5 Z" fill="#fff"/></svg></div>
<div class="det" style="left:1803px;top:740px">查看</div>
<div class="tr" style="top:777px;height:44px"></div>
<div class="hl" style="top:821px"></div>
<div class="cb" style="left:557px;top:791px"></div>
<div class="td" style="left:587px;width:169px;top:777px">测试</div>
<div class="td" style="left:757px;width:165px;top:777px">1#门</div>
<div class="td" style="left:923px;width:165px;top:777px">开门报警</div>
<div class="td" style="left:1089px;width:165px;top:777px">2021-05-10 13:36:58</div>
<div class="td tdl" style="left:1265px;top:777px">设备5 标签:设备5 类...</div>
<div class="lvl" style="left:1443px;top:788px">一般</div>
<div class="td red" style="left:1521px;width:99px;top:777px">未确认</div>
<div class="ops" style="left:1659px;top:788px"><svg class="chk" viewBox="0 0 18 18"><circle cx="9" cy="9.6" r="8.6" fill="#fff"/><path d="M5.2 9.6 L8 12 L12.6 7.2" stroke="#1aa3a8" stroke-width="1.8" fill="none" stroke-linecap="round" stroke-linejoin="round"/></svg><span class="dv"></span><svg class="cam" viewBox="0 0 20 13"><rect x="0" y="0.5" width="15.5" height="12.5" rx="2" fill="#fff"/><path d="M15 4 L19 1.3 Q20 1 20 2 L20 11.5 Q20 12.5 19 12 L15 9.5 Z" fill="#fff"/></svg></div>
<div class="det" style="left:1803px;top:785px">查看</div>
<div class="tr" style="top:822px;height:44px"></div>
<div class="hl" style="top:866px"></div>
<div class="cb" style="left:557px;top:836px"></div>
<div class="td" style="left:587px;width:169px;top:822px">测试</div>
<div class="td" style="left:757px;width:165px;top:822px">测试仪表2</div>
<div class="td" style="left:923px;width:165px;top:822px">A相电压低限报警</div>
<div class="td" style="left:1089px;width:165px;top:822px">2021-05-10 04:54:15</div>
<div class="td tdl" style="left:1265px;top:822px">设备2 标签: 类型:低...</div>
<div class="lvl" style="left:1443px;top:833px">一般</div>
<div class="td red" style="left:1521px;width:99px;top:822px">未确认</div>
<div class="ops" style="left:1659px;top:833px"><svg class="chk" viewBox="0 0 18 18"><circle cx="9" cy="9.6" r="8.6" fill="#fff"/><path d="M5.2 9.6 L8 12 L12.6 7.2" stroke="#1aa3a8" stroke-width="1.8" fill="none" stroke-linecap="round" stroke-linejoin="round"/></svg><span class="dv"></span><svg class="cam" viewBox="0 0 20 13"><rect x="0" y="0.5" width="15.5" height="12.5" rx="2" fill="#fff"/><path d="M15 4 L19 1.3 Q20 1 20 2 L20 11.5 Q20 12.5 19 12 L15 9.5 Z" fill="#fff"/></svg></div>
<div class="det" style="left:1803px;top:830px">查看</div>
<div class="tr" style="top:867px;height:40px"></div>
<div class="cb" style="left:557px;top:881px"></div>
<div class="td" style="left:587px;width:169px;top:867px">测试</div>
<div class="td" style="left:757px;width:165px;top:867px">测试仪表2</div>
<div class="td" style="left:923px;width:165px;top:867px">B相电压低限报警</div>
<div class="td" style="left:1089px;width:165px;top:867px">2021-05-10 04:54:15</div>
<div class="td tdl" style="left:1265px;top:867px">设备2 标签: 类型:低...</div>
<div class="lvl" style="left:1443px;top:878px">一般</div>
<div class="td red" style="left:1521px;width:99px;top:867px">未确认</div>
<div class="ops" style="left:1659px;top:878px"><svg class="chk" viewBox="0 0 18 18"><circle cx="9" cy="9.6" r="8.6" fill="#fff"/><path d="M5.2 9.6 L8 12 L12.6 7.2" stroke="#1aa3a8" stroke-width="1.8" fill="none" stroke-linecap="round" stroke-linejoin="round"/></svg><span class="dv"></span><svg class="cam" viewBox="0 0 20 13"><rect x="0" y="0.5" width="15.5" height="12.5" rx="2" fill="#fff"/><path d="M15 4 L19 1.3 Q20 1 20 2 L20 11.5 Q20 12.5 19 12 L15 9.5 Z" fill="#fff"/></svg></div>
<div class="det" style="left:1803px;top:875px">查看</div>
<div class="vl" style="left:586px;top:204px;height:703px"></div>
<div class="vl" style="left:756px;top:204px;height:703px"></div>
<div class="vl" style="left:922px;top:204px;height:703px"></div>
<div class="vl" style="left:1088px;top:204px;height:703px"></div>
<div class="vl" style="left:1254px;top:204px;height:703px"></div>
<div class="vl" style="left:1420px;top:204px;height:703px"></div>
<div class="vl" style="left:1520px;top:204px;height:703px"></div>
<div class="vl" style="left:1620px;top:204px;height:703px"></div>
<div class="vl" style="left:1780px;top:204px;height:703px"></div>
<div class="vl" style="left:1880px;top:204px;height:703px"></div>
<div class="abs" style="left:546px;top:204px;width:1px;height:703px;background:#197585"></div>
<div class="abs" style="left:1893px;top:204px;width:1px;height:703px;background:#197585"></div>
<div class="abs" style="left:546px;top:907px;width:1348px;height:1px;background:#197585"></div>
<div class="abs" style="left:1881px;top:237px;width:12px;height:200px;background:#4877d8"></div>

<div class="btn" style="left:546px;top:918px;width:98px;height:36px;line-height:36px;font-size:14px">一键确认</div>
<div class="abs" style="left:1297px;top:922px;font-size:13px;line-height:18px;letter-spacing:0.1px">共 1476 条</div>
<div class="abs" style="left:1374px;top:918px;width:100px;height:28px;border:1px solid #1a6a7c;border-radius:3px;background:#1f3563;font-size:14px;line-height:26px;padding-left:17px">50条/页<svg class="abs" style="left:82px;top:11px" width="10" height="6" viewBox="0 0 10 6"><path d="M1 1 L5 5 L9 1" stroke="#c8ccd4" stroke-width="1.1" fill="none"/></svg></div>
<svg class="abs" style="left:1504px;top:926px" width="8" height="12" viewBox="0 0 8 12"><path d="M6.5 1 L1.5 6 L6.5 11" stroke="#fff" stroke-width="2" fill="none"/></svg>
<div class="pg" style="left:1534px;background:#1a5e73;border-radius:3px">1</div>
<div class="pg" style="left:1574px">2</div>
<div class="pg" style="left:1614px">3</div>
<div class="pg" style="left:1654px">4</div>
<div class="pg" style="left:1694px">5</div>
<div class="pg" style="left:1734px">6</div>
<div class="pg" style="left:1774px">•••</div>
<div class="pg" style="left:1814px">30</div>
<svg class="abs" style="left:1865px;top:926px" width="8" height="12" viewBox="0 0 8 12"><path d="M1.5 1 L6.5 6 L1.5 11" stroke="#fff" stroke-width="2" fill="none"/></svg>

<div class="abs" style="left:1631px;top:873px;font-size:21px;line-height:26px;color:rgba(215,215,215,0.55)">激活 Windows</div>
<div class="abs" style="left:1631px;top:900px;font-size:15px;line-height:18px;letter-spacing:0.3px;color:rgba(215,215,215,0.55)">转到“设置”以激活 Windows。</div>

</body></html>
